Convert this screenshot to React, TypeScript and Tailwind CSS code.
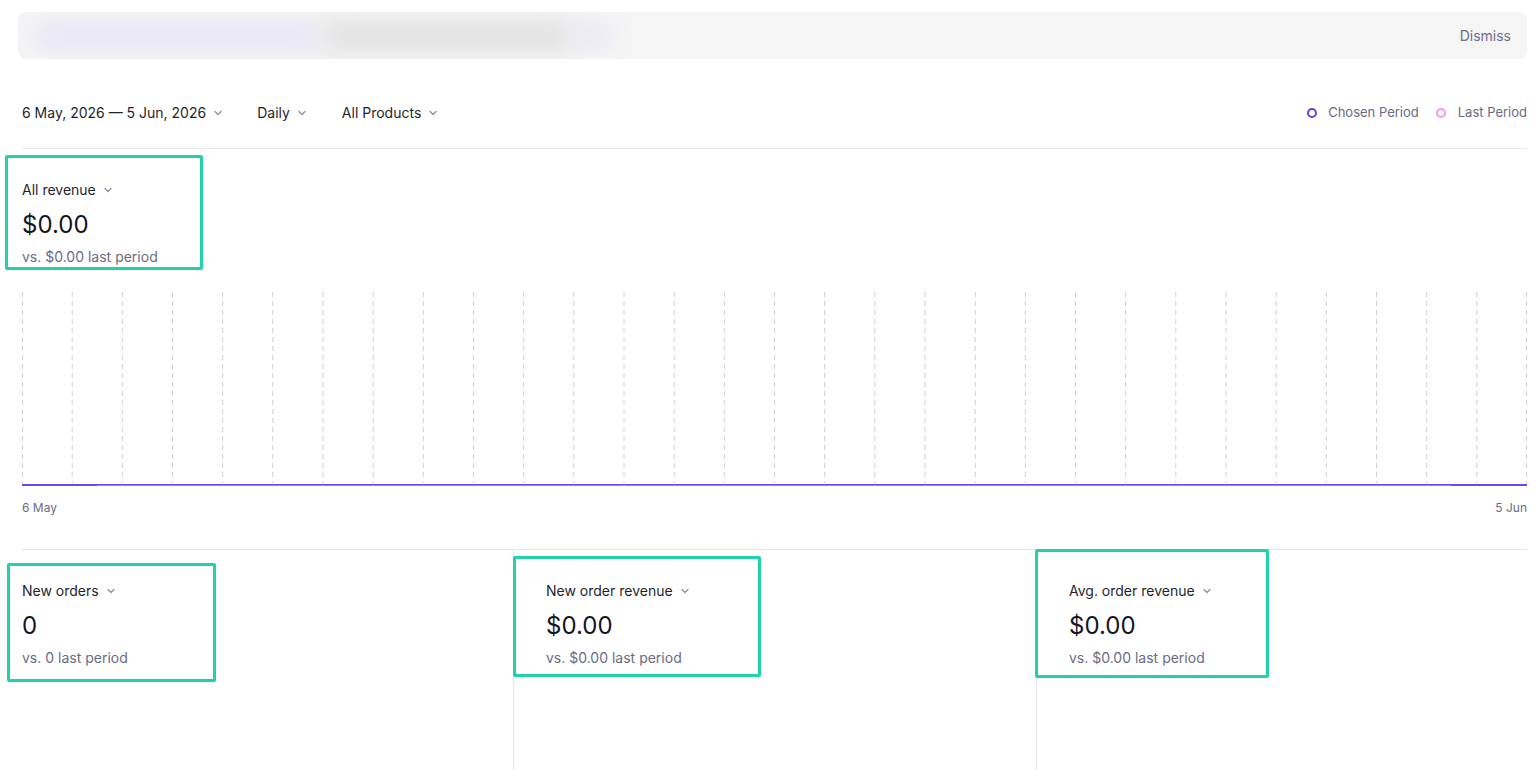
import React from "react";

const Chevron = ({ className = "" }: { className?: string }) => (
  <svg width="10" height="10" viewBox="0 0 10 10" className={className} fill="none">
    <path d="M2 3.5 L5 6.5 L8 3.5" stroke="#8a8aa0" strokeWidth="1.2" strokeLinecap="round" strokeLinejoin="round" />
  </svg>
);

const Highlight = ({ cls }: { cls: string }) => (
  <span className={`pointer-events-none absolute border-[3px] border-[#20d2ab] rounded-[2px] ${cls}`} />
);

const Metric = ({
  title,
  value,
  sub,
  box,
}: {
  title: string;
  value: string;
  sub: string;
  box: string;
}) => (
  <div className="relative">
    <Highlight cls={box} />
    <div className="flex items-center h-[20px] text-[14px] text-[#1f1f2e]">
      <span>{title}</span>
      <Chevron className="ml-[7px] mt-[1px]" />
    </div>
    <div className="mt-[10px] h-[32px] leading-[32px] text-[24px] text-[#141423]">{value}</div>
    <div className="mt-[6px] h-[20px] leading-[20px] text-[14px] text-[#6b6b83]">{sub}</div>
  </div>
);

export default function App() {
  const W = 1505;
  const lines = Array.from({ length: 31 }, (_, i) => Math.round(((i * W) / 30) * 10) / 10);
  return (
    <div
      className="w-[1536px] h-[770px] overflow-hidden bg-white relative"
      style={{ fontFamily: "Inter, 'Noto Sans', sans-serif" }}
    >
      {/* Banner */}
      <div className="mt-[12px] ml-[18px] mr-[9px] h-[47px] rounded-[8px] bg-[#f5f5f5] flex items-center overflow-hidden relative">
        <div className="flex items-center h-full pl-[14px] flex-1">
          <div className="h-[30px] w-[290px] bg-[#e8e5f6] blur-[12px] rounded-full" />
          <div className="h-[30px] w-[250px] bg-[#e0e0e0] blur-[12px] rounded-full" />
          <div className="h-[26px] w-[40px] bg-[#e8e5f6] blur-[12px] rounded-full" />
        </div>
        <span className="pr-[16px] text-[14px] text-[#6e6e8a]">Dismiss</span>
      </div>

      {/* Filter row */}
      <div className="mt-[43px] ml-[22px] mr-[9px] h-[20px] flex items-center text-[14px] text-[#1f1f2e]">
        <div className="flex items-center">
          <span>6 May, 2026 — 5 Jun, 2026</span>
          <Chevron className="ml-[7px] mt-[1px]" />
        </div>
        <div className="flex items-center ml-[34px]">
          <span>Daily</span>
          <Chevron className="ml-[7px] mt-[1px]" />
        </div>
        <div className="flex items-center ml-[35px]">
          <span>All Products</span>
          <Chevron className="ml-[7px] mt-[1px]" />
        </div>
        <div className="ml-auto flex items-center text-[13px] text-[#6b6b83] mt-[1px]">
          <span className="w-[10px] h-[10px] rounded-full border-[2px] border-[#6a3fe6]" />
          <span className="ml-[11px]">Chosen Period</span>
          <span className="ml-[17px] w-[10px] h-[10px] rounded-full border-[2px] border-[#f59ee8]" />
          <span className="ml-[12px]">Last Period</span>
        </div>
      </div>

      <div className="mt-[26px] ml-[22px] mr-[9px] border-t border-[#e8e8ec]" />

      {/* Main metric */}
      <div className="mt-[30px] ml-[22px]">
        <Metric
          title="All revenue"
          value="$0.00"
          sub="vs. $0.00 last period"
          box="-left-[17px] -top-[24px] w-[198px] h-[115px]"
        />
      </div>

      {/* Chart */}
      <div className="mt-[25px] ml-[22px] mr-[9px]">
        <svg width={W} height={195} className="block">
          {lines.map((x, i) => (
            <line
              key={i}
              x1={Math.min(Math.max(x, 0.5), W - 0.5)}
              x2={Math.min(Math.max(x, 0.5), W - 0.5)}
              y1={0}
              y2={191}
              stroke="#d0d0d6"
              strokeWidth={1}
              strokeDasharray="5 4"
            />
          ))}
          <rect x={0} y={192} width={W} height={2} fill="#7144ee" />
          <rect x={75} y={193} width={1354} height={1} fill="#a27cf3" />
        </svg>
        <div className="mt-[13px] flex justify-between text-[12px] leading-[16px] text-[#6b6b83]">
          <span>6 May</span>
          <span>5 Jun</span>
        </div>
      </div>

      <div className="mt-[33px] ml-[22px] mr-[9px] border-t border-[#e8e8ec]" />

      {/* Bottom metrics */}
      <div className="ml-[22px] mr-[9px] flex h-[221px]">
        <div className="w-[491px] pt-[30px]">
          <Metric
            title="New orders"
            value="0"
            sub="vs. 0 last period"
            box="-left-[15px] -top-[17px] w-[209px] h-[119px]"
          />
        </div>
        <div className="w-[523px] border-l border-[#e8e8ec] pl-[32px] pt-[30px]">
          <Metric
            title="New order revenue"
            value="$0.00"
            sub="vs. $0.00 last period"
            box="-left-[33px] -top-[24px] w-[248px] h-[121px]"
          />
        </div>
        <div className="flex-1 border-l border-[#e8e8ec] pl-[32px] pt-[30px]">
          <Metric
            title="Avg. order revenue"
            value="$0.00"
            sub="vs. $0.00 last period"
            box="-left-[34px] -top-[31px] w-[234px] h-[129px]"
          />
        </div>
      </div>
    </div>
  );
}
